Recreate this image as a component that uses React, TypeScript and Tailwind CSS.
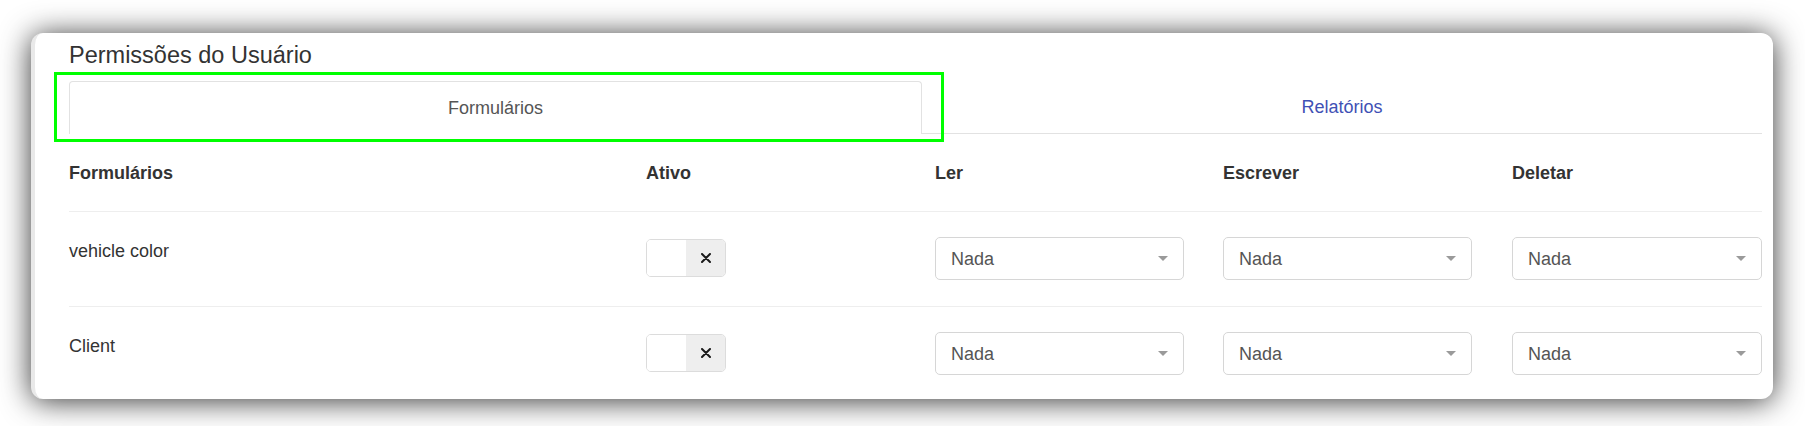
import React from "react";

function Toggle() {
  return (
    <div className="mt-[2px] flex h-[38px] w-[80px] overflow-hidden rounded-[5px] border border-[#dcdcdc]">
      <div className="w-[39px] bg-white" />
      <div className="flex flex-1 items-center justify-center bg-[#eeeeee]">
        <svg width="10" height="10" viewBox="0 0 10 10">
          <path d="M1 1 L9 9 M9 1 L1 9" stroke="#1a1a1a" strokeWidth="2" strokeLinecap="round" />
        </svg>
      </div>
    </div>
  );
}

function Select({ full }: { full?: boolean }) {
  return (
    <div
      className={
        (full ? "w-full " : "w-[249px] ") +
        "flex h-[43px] items-center justify-between rounded-[5px] border border-[#d6d6d6] bg-white pl-[15px] pr-[15px] text-[18px] text-[#555555]"
      }
    >
      <span className="leading-[26px]">Nada</span>
      <svg width="10" height="5" viewBox="0 0 10 5">
        <path d="M0 0 L10 0 L5 5 Z" fill="#9a9a9a" />
      </svg>
    </div>
  );
}

function Row({ name }: { name: string }) {
  return (
    <div className="grid grid-cols-[577px_289px_288px_289px_1fr] items-start border-t border-[#eeeeee] pt-[25px] pb-[26px]">
      <div className="pt-[1px] text-[18px] leading-[26px] text-[#333333]">{name}</div>
      <div>
        <Toggle />
      </div>
      <div>
        <Select />
      </div>
      <div>
        <Select />
      </div>
      <div>
        <Select full />
      </div>
    </div>
  );
}

export default function App() {
  const headers = ["Formulários", "Ativo", "Ler", "Escrever", "Deletar"];
  return (
    <div className="relative h-[426px] w-[1805px] overflow-hidden bg-white pl-[31px] pt-[33px] font-['Liberation_Sans',Arial,sans-serif]">
      <div className="h-[366px] w-[1742px] overflow-hidden rounded-[12px] border-l-4 border-[#e9e9e9] bg-white pl-[34px] pr-[11px] pt-[9px] shadow-[0_2px_30px_rgba(0,0,0,0.8)]">
        <div className="text-[23.5px] leading-[26px] text-[#333333]">Permissões do Usuário</div>
        <div className="mt-[13px] flex h-[53px]">
          <div className="flex w-[853px] items-center justify-center rounded-t-[4px] border border-b-0 border-[#e2e2e2] text-[18px] text-[#555555]">
            Formulários
          </div>
          <div className="flex flex-1 items-center justify-center border-b border-[#e2e2e2] text-[18px] text-[#3f51b5]">
            Relatórios
          </div>
        </div>
        <div className="grid h-[77px] grid-cols-[577px_289px_288px_289px_1fr] items-center">
          {headers.map((h) => (
            <div key={h} className="text-[18px] font-bold leading-[26px] text-[#333333]">
              {h}
            </div>
          ))}
        </div>
        <Row name="vehicle color" />
        <Row name="Client" />
      </div>
      <div className="absolute left-[54px] top-[72px] h-[70px] w-[890px] border-[3px] border-[#00ff00]" />
    </div>
  );
}
